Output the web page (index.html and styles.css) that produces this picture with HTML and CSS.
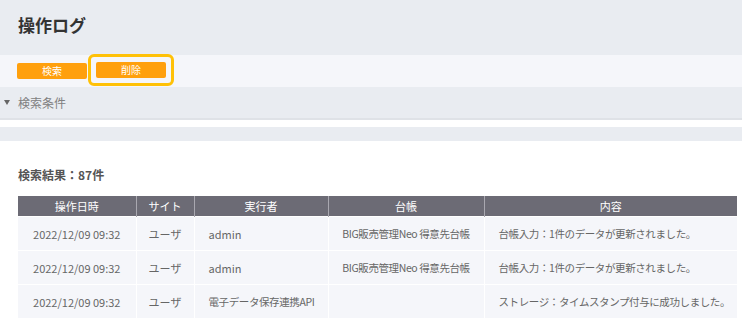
FILE: index.html
```html
<!DOCTYPE html>
<html lang="ja">
<head>
  <meta charset="UTF-8">
  <meta name="viewport" content="width=device-width, initial-scale=1.0">
  <title>操作ログ</title>
  <link rel="stylesheet" href="styles.css">
</head>
<body>
  <header class="page-head">
    <h1>操作ログ</h1>
  </header>

  <div class="toolbar">
    <button class="btn">検索</button>
    <span class="focus-ring"><button class="btn">削除</button></span>
  </div>

  <div class="cond-head">
    <span class="tri"></span>検索条件
  </div>

  <div class="spacer"></div>
  <div class="band"></div>

  <div class="content">
    <p class="count">検索結果：87件</p>
    <table class="log">
      <colgroup>
        <col style="width: 118px">
        <col style="width: 58px">
        <col style="width: 134px">
        <col style="width: 156px">
        <col>
      </colgroup>
      <thead>
        <tr>
          <th>操作日時</th>
          <th>サイト</th>
          <th>実行者</th>
          <th>台帳</th>
          <th>内容</th>
        </tr>
      </thead>
      <tbody>
        <tr>
          <td class="c">2022/12/09 09:32</td>
          <td class="c">ユーザ</td>
          <td>admin</td>
          <td class="c jp">BIG販売管理Neo 得意先台帳</td>
          <td class="jp">台帳入力：1件のデータが更新されました。</td>
        </tr>
        <tr>
          <td class="c">2022/12/09 09:32</td>
          <td class="c">ユーザ</td>
          <td>admin</td>
          <td class="c jp">BIG販売管理Neo 得意先台帳</td>
          <td class="jp">台帳入力：1件のデータが更新されました。</td>
        </tr>
        <tr>
          <td class="c">2022/12/09 09:32</td>
          <td class="c">ユーザ</td>
          <td class="jp">電子データ保存連携API</td>
          <td class="c"></td>
          <td class="jp">ストレージ：タイムスタンプ付与に成功しました。</td>
        </tr>
      </tbody>
    </table>
  </div>
</body>
</html>
```

FILE: styles.css
```css
body {
  margin: 0;
  font-family: "Noto Sans CJK JP", "Noto Sans", sans-serif;
  background: #fff;
  color: #666;
}
.page-head {
  background: #e9ecf1;
  height: 55px;
  display: flex;
  align-items: center;
  padding-left: 18px;
}
.page-head h1 {
  margin: 0 0 6px;
  font-size: 17px;
  font-weight: bold;
  color: #333;
}
.toolbar {
  background: #f5f6fa;
  height: 32px;
  display: flex;
  align-items: center;
  padding-left: 17px;
  gap: 1px;
}
.btn {
  width: 70px;
  height: 16px;
  padding: 0;
  border: none;
  border-radius: 2px;
  background: #ffa00d;
  color: #fff;
  font-family: inherit;
  font-size: 10px;
  line-height: 16px;
}
.focus-ring {
  display: flex;
  padding: 5px 5px;
  border: 3px solid #ffc107;
  border-radius: 6px;
  margin-top: -2px;
}
.cond-head {
  background: #e9ecf1;
  height: 31px;
  border-bottom: 2px solid #dfe2e7;
  display: flex;
  align-items: center;
  font-size: 12px;
  color: #808080;
  padding-left: 4px;
}
.tri {
  width: 0;
  height: 0;
  border-left: 3px solid transparent;
  border-right: 3px solid transparent;
  border-top: 5px solid #666;
  margin-right: 8px;
}
.spacer {
  height: 7px;
}
.band {
  background: #e9ecf1;
  height: 14px;
}
.content {
  padding: 0 5px 0 18px;
}
.count {
  margin: 26px 0 13px;
  font-size: 12px;
  font-weight: bold;
  color: #555;
  line-height: 16px;
}
.log {
  width: 100%;
  border-collapse: collapse;
  table-layout: fixed;
  font-size: 11px;
}
.log th {
  background: #6c6b75;
  color: #fff;
  font-weight: normal;
  height: 20px;
  padding: 0;
  border-left: 1px solid #a9a8b0;
}
.log th:first-child {
  border-left: none;
}
.log td {
  background: #f5f6fa;
  height: 33px;
  padding: 0 14px;
  border-top: 1px solid #fff;
  border-left: 1px solid #fff;
  white-space: nowrap;
}
.log td:first-child {
  border-left: none;
}
.log td.c {
  text-align: center;
  padding: 0;
}
.log td.jp {
  font-size: 10.5px;
  letter-spacing: -0.4px;
}
```
